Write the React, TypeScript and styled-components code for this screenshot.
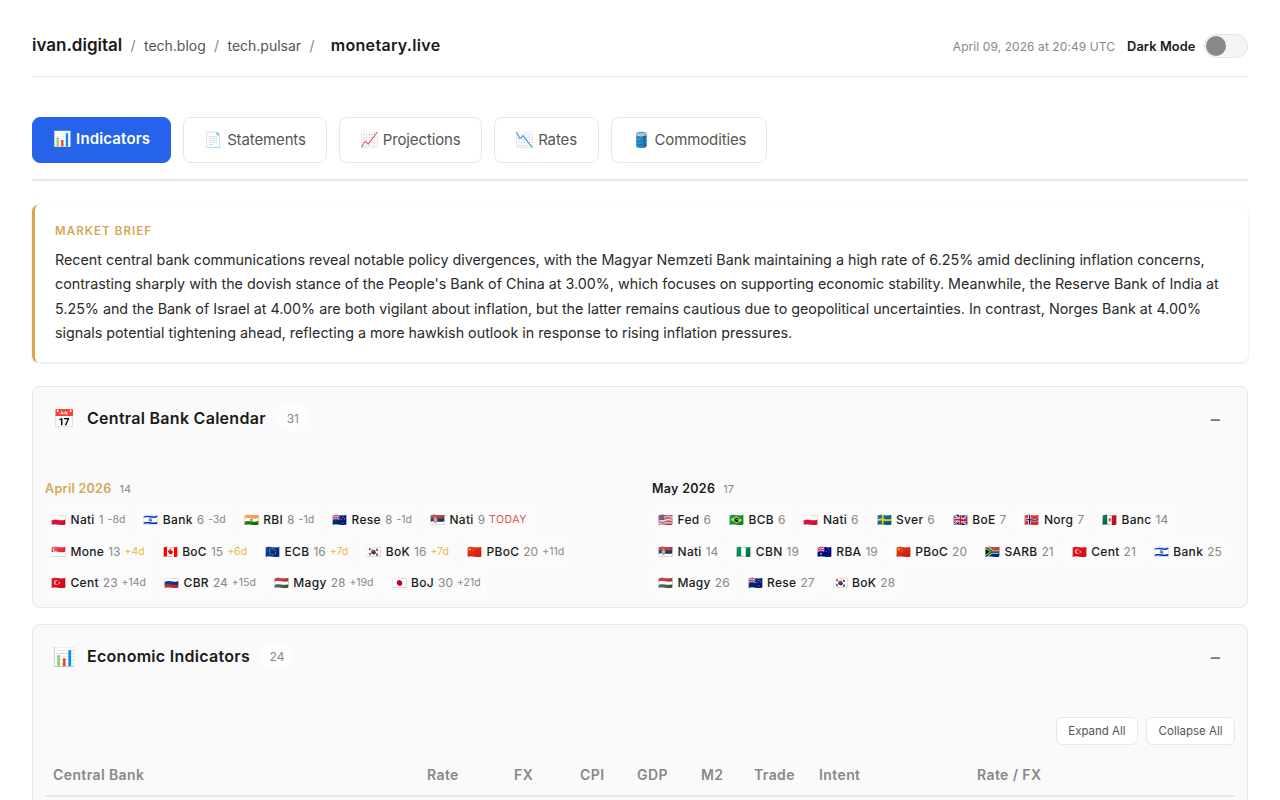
import React from "react"
import styled, { createGlobalStyle } from "styled-components"

const GlobalStyle = createGlobalStyle`
    html, body {
        margin: 0;
        padding: 0;
        height: 800px;
        overflow: hidden;
        background: #fff;
        font-family: Inter, "Noto Sans", sans-serif;
        color: #1a1a1a;
    }
    * {
        box-sizing: border-box;
    }
`

const Page = styled.div`
    padding: 24px 32px 0;
`

const Header = styled.header`
    display: flex;
    justify-content: space-between;
    align-items: center;
    height: 53px;
    padding-bottom: 8px;
    border-bottom: 1px solid #e8e8e8;
`

const Crumbs = styled.nav`
    display: flex;
    align-items: baseline;
    padding-bottom: 2px;
`

const Brand = styled.a`
    font-size: 17px;
    font-weight: 600;
    color: #1a1a1a;
`

const Crumb = styled.a`
    font-size: 14px;
    color: #555;
`

const Slash = styled.span`
    font-size: 14px;
    color: #888;
    margin: 0 8.3px;
`

const Current = styled.span`
    font-size: 16px;
    font-weight: 600;
    letter-spacing: 0.3px;
    margin-left: 8px;
`

const HeaderRight = styled.div`
    display: flex;
    align-items: center;
`

const Stamp = styled.span`
    font-size: 12px;
    color: #888;
    letter-spacing: 0.08px;
    margin-right: 12px;
`

const ToggleLabel = styled.span`
    font-size: 12.8px;
    font-weight: 600;
    letter-spacing: 0.1px;
    margin-right: 8.5px;
`

const Toggle = styled.div`
    width: 44px;
    height: 24px;
    padding: 1px;
    border: 1px solid #e5e5e5;
    border-radius: 12px;
    background: #f5f5f5;
`

const Knob = styled.div`
    width: 20px;
    height: 20px;
    border-radius: 50%;
    background: #888;
`

const Tabs = styled.div`
    display: flex;
    gap: 12px;
    margin-top: 40px;
    padding-bottom: 16px;
    border-bottom: 2px solid #e8e8e8;
`

const Tab = styled.button<{ $active?: boolean }>`
    height: 46px;
    min-width: 105px;
    padding: ${({ $active }) => ($active ? "0 20px 3px" : "0 20px 1px")};
    border: 1px solid ${({ $active }) => ($active ? "#2563eb" : "#e8e8e8")};
    border-radius: 8px;
    background: ${({ $active }) => ($active ? "#2563eb" : "#fff")};
    color: ${({ $active }) => ($active ? "#fff" : "#555")};
    font-family: inherit;
    font-size: 15px;
    font-weight: ${({ $active }) => ($active ? 600 : 400)};
    letter-spacing: ${({ $active }) => ($active ? "0.15px" : "-0.13px")};
`

const Brief = styled.section`
    margin-top: 24px;
    padding: 17px 20px 17px;
    background: #fff;
    border-left: 3px solid #d4a853;
    border-radius: 6px;
    box-shadow: 0 1px 3px rgba(0, 0, 0, 0.12);
`

const BriefLabel = styled.div`
    font-size: 11.5px;
    font-weight: 600;
    letter-spacing: 1.1px;
    line-height: 18px;
    color: #d4a853;
    margin-bottom: 8px;
`

const BriefText = styled.p`
    margin: 0;
    font-size: 14.3px;
    line-height: 24.25px;
    color: #2a2a2a;
`

const Section = styled.section<{ $open?: boolean }>`
    margin-top: ${({ $open }) => ($open ? "16px" : "24px")};
    padding: 0 12px;
    background: #fafafa;
    border: 1px solid #e8e8e8;
    border-radius: 8px;
`

const SectionHead = styled.div`
    display: flex;
    align-items: center;
    height: 62px;
    padding: 0 8px;
`

const SectionIcon = styled.span`
    font-size: 18px;
    width: 34px;
`

const SectionTitle = styled.h2`
    margin: 0;
    font-size: 16px;
    font-weight: 600;
    letter-spacing: 0.28px;
`

const Count = styled.span`
    display: flex;
    align-items: center;
    justify-content: center;
    width: 32px;
    height: 28px;
    margin-left: 11px;
    border-radius: 14px;
    background: #fdfdfd;
    font-size: 12px;
    color: #888;
`

const Collapse = styled.span`
    margin-left: auto;
    margin-right: 5px;
    margin-top: 2px;
    font-size: 20px;
    color: #777;
`

const Months = styled.div`
    display: grid;
    grid-template-columns: 583px 583px;
    gap: 24px;
    margin-top: 32px;
    padding-bottom: 10px;
`

const MonthHead = styled.div`
    display: flex;
    align-items: baseline;
    gap: 8px;
    margin-bottom: 10px;
`

const MonthName = styled.span<{ $current?: boolean }>`
    font-size: 12.5px;
    font-weight: 600;
    letter-spacing: 0.3px;
    color: ${({ $current }) => ($current ? "#d4a853" : "#1a1a1a")};
`

const MonthCount = styled.span`
    font-size: 11px;
    color: #888;
`

const Chips = styled.div`
    display: flex;
    flex-wrap: wrap;
    gap: 3.5px 6px;
`

const Chip = styled.span`
    display: inline-flex;
    align-items: baseline;
    height: 28px;
    padding: 6px;
    border-radius: 4px;
    background: #fbfbfb;
    white-space: nowrap;
    font-size: 12px;
`

const Flag = styled.span`
    margin-right: 4.5px;
`

const ChipName = styled.span`
    font-weight: 500;
    letter-spacing: 0.3px;
    margin-right: 4px;
`

const ChipDay = styled.span`
    color: #888;
`

const Offset = styled.span<{ $tone?: "soon" | "today" }>`
    position: relative;
    top: -1px;
    margin-left: 4px;
    font-size: 10.5px;
    letter-spacing: ${({ $tone }) => ($tone === "today" ? "0.5px" : "0")};
    color: ${({ $tone }) => ($tone === "soon" ? "#e6bd3c" : $tone === "today" ? "#d9534f" : "#888")};
`

const Toolbar = styled.div`
    display: flex;
    justify-content: flex-end;
    gap: 8px;
    margin-top: 30px;
`

const SmallButton = styled.button`
    height: 28px;
    padding: 0 11.5px;
    border: 1px solid #e8e8e8;
    border-radius: 6px;
    background: #fff;
    font-family: inherit;
    font-size: 11.5px;
    color: #555;
`

const TableHead = styled.div`
    display: grid;
    grid-template-columns: 374px 87px 66px 57px 64px 53px 65px 158px 266px;
    margin-top: 21px;
    padding-bottom: 12px;
    border-bottom: 2px solid #e8e8e8;
    margin-bottom: 60px;
`

const HeadCell = styled.span`
    padding-left: 8px;
    font-size: 14px;
    font-weight: 600;
    letter-spacing: 0.4px;
    color: #888;
`

type Meeting = { flag: string; name: string; day: number; offset?: string; tone?: "soon" | "today" }

const APRIL: Meeting[] = [
    { flag: "🇵🇱", name: "Nati", day: 1, offset: "-8d" },
    { flag: "🇮🇱", name: "Bank", day: 6, offset: "-3d" },
    { flag: "🇮🇳", name: "RBI", day: 8, offset: "-1d" },
    { flag: "🇳🇿", name: "Rese", day: 8, offset: "-1d" },
    { flag: "🇷🇸", name: "Nati", day: 9, offset: "TODAY", tone: "today" },
    { flag: "🇸🇬", name: "Mone", day: 13, offset: "+4d", tone: "soon" },
    { flag: "🇨🇦", name: "BoC", day: 15, offset: "+6d", tone: "soon" },
    { flag: "🇪🇺", name: "ECB", day: 16, offset: "+7d", tone: "soon" },
    { flag: "🇰🇷", name: "BoK", day: 16, offset: "+7d", tone: "soon" },
    { flag: "🇨🇳", name: "PBoC", day: 20, offset: "+11d" },
    { flag: "🇹🇷", name: "Cent", day: 23, offset: "+14d" },
    { flag: "🇷🇺", name: "CBR", day: 24, offset: "+15d" },
    { flag: "🇭🇺", name: "Magy", day: 28, offset: "+19d" },
    { flag: "🇯🇵", name: "BoJ", day: 30, offset: "+21d" },
]

const MAY: Meeting[] = [
    { flag: "🇺🇸", name: "Fed", day: 6 },
    { flag: "🇧🇷", name: "BCB", day: 6 },
    { flag: "🇵🇱", name: "Nati", day: 6 },
    { flag: "🇸🇪", name: "Sver", day: 6 },
    { flag: "🇬🇧", name: "BoE", day: 7 },
    { flag: "🇳🇴", name: "Norg", day: 7 },
    { flag: "🇲🇽", name: "Banc", day: 14 },
    { flag: "🇷🇸", name: "Nati", day: 14 },
    { flag: "🇳🇬", name: "CBN", day: 19 },
    { flag: "🇦🇺", name: "RBA", day: 19 },
    { flag: "🇨🇳", name: "PBoC", day: 20 },
    { flag: "🇿🇦", name: "SARB", day: 21 },
    { flag: "🇹🇷", name: "Cent", day: 21 },
    { flag: "🇮🇱", name: "Bank", day: 25 },
    { flag: "🇭🇺", name: "Magy", day: 26 },
    { flag: "🇳🇿", name: "Rese", day: 27 },
    { flag: "🇰🇷", name: "BoK", day: 28 },
]

const TABS = ["📊 Indicators", "📄 Statements", "📈 Projections", "📉 Rates", "🛢️ Commodities"]
const COLUMNS = ["Central Bank", "Rate", "FX", "CPI", "GDP", "M2", "Trade", "Intent", "Rate / FX"]

const MeetingChips = ({ items }: { items: Meeting[] }) => (
    <Chips>
        {items.map((m, i) => (
            <Chip key={i}>
                <Flag>{m.flag}</Flag>
                <ChipName>{m.name}</ChipName>
                <ChipDay>{m.day}</ChipDay>
                {m.offset && <Offset $tone={m.tone}>{m.offset}</Offset>}
            </Chip>
        ))}
    </Chips>
)

export default function App() {
    return <Page>
        <GlobalStyle />

        <Header>
            <Crumbs>
                <Brand>ivan.digital</Brand>
                <Slash>/</Slash>
                <Crumb>tech.blog</Crumb>
                <Slash>/</Slash>
                <Crumb>tech.pulsar</Crumb>
                <Slash>/</Slash>
                <Current>monetary.live</Current>
            </Crumbs>
            <HeaderRight>
                <Stamp>April 09, 2026 at 20:49 UTC</Stamp>
                <ToggleLabel>Dark Mode</ToggleLabel>
                <Toggle><Knob /></Toggle>
            </HeaderRight>
        </Header>

        <Tabs>
            {TABS.map((t, i) => <Tab key={t} $active={i === 0}>{t}</Tab>)}
        </Tabs>

        <Brief>
            <BriefLabel>MARKET BRIEF</BriefLabel>
            <BriefText>
                Recent central bank communications reveal notable policy divergences, with the Magyar Nemzeti Bank maintaining a high rate of 6.25% amid declining inflation concerns, contrasting sharply with the dovish stance of the People's Bank of China at 3.00%, which focuses on supporting economic stability. Meanwhile, the Reserve Bank of India at 5.25% and the Bank of Israel at 4.00% are both vigilant about inflation, but the latter remains cautious due to geopolitical uncertainties. In contrast, Norges Bank at 4.00% signals potential tightening ahead, reflecting a more hawkish outlook in response to rising inflation pressures.
            </BriefText>
        </Brief>

        <Section>
            <SectionHead>
                <SectionIcon>📅</SectionIcon>
                <SectionTitle>Central Bank Calendar</SectionTitle>
                <Count>31</Count>
                <Collapse>−</Collapse>
            </SectionHead>
            <Months>
                <div>
                    <MonthHead><MonthName $current>April 2026</MonthName><MonthCount>14</MonthCount></MonthHead>
                    <MeetingChips items={APRIL} />
                </div>
                <div>
                    <MonthHead><MonthName>May 2026</MonthName><MonthCount>17</MonthCount></MonthHead>
                    <MeetingChips items={MAY} />
                </div>
            </Months>
        </Section>

        <Section $open>
            <SectionHead>
                <SectionIcon>📊</SectionIcon>
                <SectionTitle>Economic Indicators</SectionTitle>
                <Count>24</Count>
                <Collapse>−</Collapse>
            </SectionHead>
            <Toolbar>
                <SmallButton>Expand All</SmallButton>
                <SmallButton>Collapse All</SmallButton>
            </Toolbar>
            <TableHead>
                {COLUMNS.map(c => <HeadCell key={c}>{c}</HeadCell>)}
            </TableHead>
        </Section>
    </Page>
}
